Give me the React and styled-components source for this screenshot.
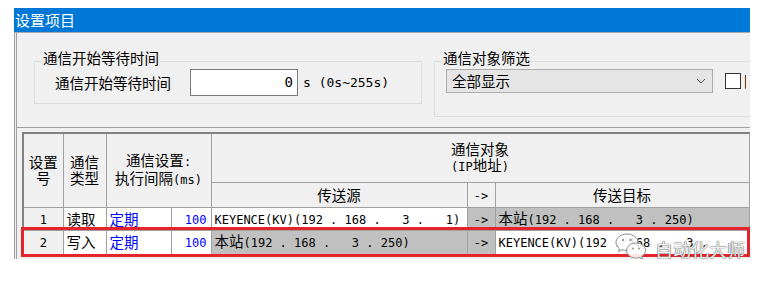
import React from "react";
import styled, { createGlobalStyle } from "styled-components";

const CJK = `"Noto Sans CJK SC", "Noto Sans CJK JP", sans-serif`;
const MONO = `"DejaVu Sans Mono", "Liberation Mono", monospace`;

const GlobalStyle = createGlobalStyle`
  html, body { margin: 0; padding: 0; background: #ffffff; }
  body { width: 772px; height: 283px; overflow: hidden; font-family: ${CJK}; }
  * { box-sizing: border-box; }
`;

const Page = styled.div`
  position: relative;
  width: 772px;
  height: 283px;
  padding: 8px 0 0 14px;
  overflow: hidden;
`;

const Window = styled.div`
  width: 736px;
  height: 251px;
  background: #f0f0f0;
  overflow: hidden;
  display: flex;
  flex-direction: column;
`;

const TitleBar = styled.div`
  flex: none;
  height: 25px;
  background: #0078d7;
  color: #ffffff;
  font: 15px/24px ${CJK};
  padding-left: 1px;
  border-bottom: 1px solid #a3a9ae;
`;

const Client = styled.div`
  flex: 1;
  border-left: 3px double #a0a0a0;
  display: flex;
  flex-direction: column;
  min-height: 0;
  overflow: hidden;
`;

const TopSection = styled.div`
  flex: none;
  display: flex;
  align-items: flex-start;
  gap: 12px;
  padding: 28px 0 10px 17px;
`;

const Group = styled.div`
  position: relative;
  flex: none;
  width: ${(p) => p.$w}px;
  height: ${(p) => p.$h}px;
  border: 1px solid #dcdcdc;
  padding: 7px 0 0 ${(p) => p.$pl}px;
  display: flex;
  align-items: center;
  align-self: flex-start;
  overflow: visible;
`;

const GroupTitle = styled.span`
  position: absolute;
  top: -12px;
  left: 7px;
  padding: 0 1px;
  background: #f0f0f0;
  font: 14.5px/16px ${CJK};
  color: #000;
`;

const Row = styled.div`
  display: flex;
  align-items: center;
  height: 27px;
  align-self: flex-start;
`;

const FieldLabel = styled.span`
  font: 14.5px/27px ${CJK};
  color: #000;
  margin-right: 19px;
`;

const NumberInput = styled.div`
  width: 108px;
  height: 27px;
  background: #ffffff;
  border: 1px solid #7a7a7a;
  text-align: right;
  padding-right: 4px;
  font: 14px/25px ${MONO};
  color: #000;
`;

const Unit = styled.span`
  margin-left: 5px;
  font: 13px/27px ${MONO};
  color: #000;
  white-space: pre;
`;

const Select = styled.div`
  flex: none;
  width: 267px;
  height: 24px;
  background: #e5e5e5;
  border: 1px solid #adadad;
  display: flex;
  align-items: center;
  justify-content: space-between;
  padding: 0 6px 0 5px;
  font: 14.5px/22px ${CJK};
  color: #000;
`;

const FilterRow = styled.div`
  display: flex;
  align-items: center;
  height: 24px;
  width: 300px;
  align-self: flex-start;
  gap: 12px;
  white-space: nowrap;
  overflow: hidden;
`;

const Check = styled.label`
  display: flex;
  align-items: center;
  gap: 3px;
  font: 14.5px/16px ${CJK};
  color: #000;
`;

const Box = styled.span`
  flex: none;
  width: 16px;
  height: 16px;
  background: #ffffff;
  border: 1px solid #333333;
`;

const Panel = styled.div`
  position: relative;
  flex: 1;
  border-top: 1px solid #a0a0a0;
  padding: 4px 0 0 5px;
`;

const Table = styled.table`
  width: 726px;
  table-layout: fixed;
  border-collapse: collapse;
  border-top: 2px solid #808080;
  border-left: 2px solid #808080;
`;

const Col = styled.col`
  width: ${(p) => p.$w}px;
`;

const TRow = styled.tr`
  height: ${(p) => p.$h}px;
`;

const Th = styled.th`
  background: #f0f0f0;
  border: 1px solid #a0a0a0;
  font: 14.5px/16px ${CJK};
  font-weight: normal;
  color: #000;
  text-align: center;
  vertical-align: middle;
  padding: 0;
`;

const bgs = { white: "#ffffff", gray: "#c0c0c0", light: "#f0f0f0" };

const Td = styled.td`
  background: ${(p) => bgs[p.$bg || "white"]};
  border: 1px solid #a0a0a0;
  font: 14.5px/16px ${CJK};
  color: ${(p) => (p.$blue ? "#0000ff" : "#000")};
  text-align: ${(p) => p.$align || "left"};
  padding: ${(p) => (p.$align === "right" ? "0 4px 0 0" : p.$align === "center" ? "0" : "0 0 0 3px")};
  vertical-align: middle;
  white-space: nowrap;
  overflow: hidden;
`;

const M = styled.span`
  font: 12px/16px ${MONO};
  white-space: pre;
`;

const Highlight = styled.div`
  position: absolute;
  left: 4px;
  top: 99px;
  width: 729px;
  height: 30px;
  border: 3px solid #e5232a;
  pointer-events: none;
`;

const Watermark = styled.div`
  position: absolute;
  left: 614px;
  top: 232px;
  display: flex;
  align-items: flex-end;
  gap: 7px;
  pointer-events: none;
`;

const WatermarkText = styled.span`
  font: 18px/22px ${CJK};
  color: rgba(255, 255, 255, 0.92);
  text-shadow: 0 0 1px #555, 0 0 1px #555;
`;

const WeChatIcon = () => (
  <svg width="34" height="28" viewBox="0 0 34 28">
    <g fill="rgba(255,255,255,0.88)" stroke="#8c8c8c" strokeWidth="1">
      <path d="M13 2 C6.5 2 2 6 2 10.5 C2 13 3.3 15 5.3 16.5 L4.5 19.5 L8 17.7 C9.5 18.2 11.2 18.5 13 18.5 C19.5 18.5 24 14.5 24 10.3 C24 6 19.5 2 13 2 Z" />
      <path d="M22 11 C16.5 11 12.5 14.5 12.5 18.5 C12.5 22.5 16.5 26 22 26 C23.3 26 24.5 25.8 25.6 25.4 L28.5 27 L27.8 24.3 C30 23 31.5 20.9 31.5 18.5 C31.5 14.5 27.5 11 22 11 Z" />
    </g>
    <g fill="#9a9a9a">
      <circle cx="9" cy="8" r="1.2" />
      <circle cx="16.5" cy="8" r="1.2" />
      <circle cx="19" cy="16.5" r="1" />
      <circle cx="25" cy="16.5" r="1" />
    </g>
  </svg>
);

const Chevron = () => (
  <svg width="10" height="6" viewBox="0 0 10 6">
    <path d="M1 1 L5 5 L9 1" fill="none" stroke="#555" strokeWidth="1" />
  </svg>
);

const rows = [
  {
    no: "1",
    type: "读取",
    src: { bg: "white", content: <M>KEYENCE(KV)(192 . 168 .   3 .   1)</M> },
    dst: { bg: "gray", content: <>本站<M>(192 . 168 .   3 . 250)</M></> },
  },
  {
    no: "2",
    type: "写入",
    src: { bg: "gray", content: <>本站<M>(192 . 168 .   3 . 250)</M></> },
    dst: { bg: "white", content: <M>KEYENCE(KV)(192 . 168 .   3 .</M> },
  },
];

export default function App() {
  return (
    <>
      <GlobalStyle />
      <Page>
        <Window>
          <TitleBar>设置项目</TitleBar>
          <Client>
            <TopSection>
              <Group $w={388} $h={43} $pl={20}>
                <GroupTitle>通信开始等待时间</GroupTitle>
                <Row>
                  <FieldLabel>通信开始等待时间</FieldLabel>
                  <NumberInput>0</NumberInput>
                  <Unit>s (0s~255s)</Unit>
                </Row>
              </Group>
              <Group $w={340} $h={56} $pl={11}>
                <GroupTitle>通信对象筛选</GroupTitle>
                <FilterRow>
                  <Select>
                    <span>全部显示</span>
                    <Chevron />
                  </Select>
                  <Check>
                    <Box />
                    隐
                  </Check>
                </FilterRow>
              </Group>
            </TopSection>
            <Panel>
              <Table>
                <colgroup>
                  <Col $w={40} />
                  <Col $w={43} />
                  <Col $w={65} />
                  <Col $w={40} />
                  <Col $w={256} />
                  <Col $w={28} />
                  <Col $w={254} />
                </colgroup>
                <tbody>
                  <TRow $h={49}>
                    <Th rowSpan={2}>设置<br />号</Th>
                    <Th rowSpan={2}>通信<br />类型</Th>
                    <Th rowSpan={2} colSpan={2}>
                      通信设置<M>:</M>
                      <br />
                      执行间隔<M>(ms)</M>
                    </Th>
                    <Th colSpan={3}>
                      通信对象
                      <br />
                      <M>(IP</M>地址<M>)</M>
                    </Th>
                  </TRow>
                  <TRow $h={25}>
                    <Th>传送源</Th>
                    <Th><M>-&gt;</M></Th>
                    <Th>传送目标</Th>
                  </TRow>
                  {rows.map((r, i) => (
                    <TRow key={r.no} $h={i === 0 ? 23 : 24}>
                      <Td $bg="light" $align="center"><M>{r.no}</M></Td>
                      <Td>{r.type}</Td>
                      <Td $blue>定期</Td>
                      <Td $blue $align="right"><M>100</M></Td>
                      <Td $bg={r.src.bg}>{r.src.content}</Td>
                      <Td $bg="gray" $align="center"><M>-&gt;</M></Td>
                      <Td $bg={r.dst.bg}>{r.dst.content}</Td>
                    </TRow>
                  ))}
                </tbody>
              </Table>
              <Highlight />
            </Panel>
          </Client>
        </Window>
        <Watermark>
          <WeChatIcon />
          <WatermarkText>自动化大师</WatermarkText>
        </Watermark>
      </Page>
    </>
  );
}
